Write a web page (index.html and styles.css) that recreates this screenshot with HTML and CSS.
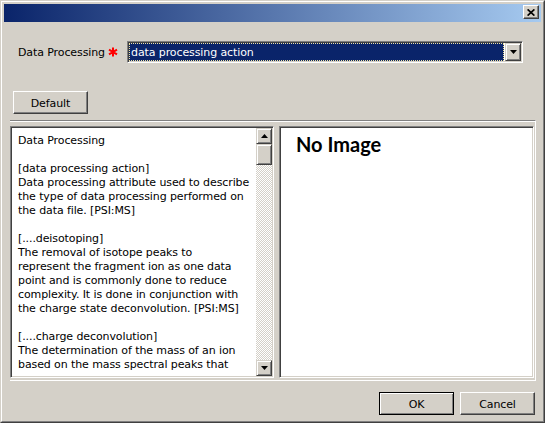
FILE: index.html
```html
<!DOCTYPE html>
<html>
<head>
<meta charset="utf-8">
<title>Data Processing</title>
<link rel="stylesheet" href="styles.css">
</head>
<body>
<div class="window">
  <div class="frame">
    <div class="titlebar">
      <button class="close" aria-label="Close">
        <svg width="8" height="7" viewBox="0 0 8 7"><path d="M0.6 0.4 L7.4 6.6 M7.4 0.4 L0.6 6.6" stroke="#000" stroke-width="1.7" fill="none"/></svg>
      </button>
    </div>
    <div class="content">
      <div class="field-row">
        <span class="label">Data Processing</span>
        <span class="required">
          <svg width="10" height="10" viewBox="0 0 10 10"><path d="M5 0.5 V9.5 M1 2.6 L9 7.4 M1 7.4 L9 2.6" stroke="#ff0000" stroke-width="2" fill="none"/></svg>
        </span>
        <div class="combo">
          <div class="combo-value"><span>data processing action</span></div>
          <div class="combo-btn">
            <svg width="7" height="4" viewBox="0 0 7 4"><path d="M0 0 H7 L3.5 4 Z" fill="#000"/></svg>
          </div>
        </div>
      </div>
      <div class="toolbar">
        <button class="btn">Default</button>
      </div>
      <div class="split">
        <div class="pane text-pane">
          <div class="text">Data Processing<br><br>[data processing action]<br>Data processing attribute used to describe<br>the type of data processing performed on<br>the data file. [PSI:MS]<br><br>[....deisotoping]<br>The removal of isotope peaks to<br>represent the fragment ion as one data<br>point and is commonly done to reduce<br>complexity. It is done in conjunction with<br>the charge state deconvolution. [PSI:MS]<br><br>[....charge deconvolution]<br>The determination of the mass of an ion<br>based on the mass spectral peaks that</div>
          <div class="scrollbar">
            <div class="sb-btn">
              <svg width="7" height="4" viewBox="0 0 7 4"><path d="M0 4 H7 L3.5 0 Z" fill="#000"/></svg>
            </div>
            <div class="sb-track"><div class="sb-thumb"></div></div>
            <div class="sb-btn">
              <svg width="7" height="4" viewBox="0 0 7 4"><path d="M0 0 H7 L3.5 4 Z" fill="#000"/></svg>
            </div>
          </div>
        </div>
        <div class="pane image-pane">
          <div class="no-image">No Image</div>
        </div>
      </div>
      <div class="actions">
        <button class="btn default">OK</button>
        <button class="btn">Cancel</button>
      </div>
    </div>
  </div>
</div>
</body>
</html>
```

FILE: styles.css
```css
* { box-sizing: border-box; }
html, body { margin: 0; padding: 0; }
body {
  width: 545px;
  height: 423px;
  overflow: hidden;
  background: #d4d0c8;
  font-family: "DejaVu Sans", Tahoma, sans-serif;
  font-size: 11px;
  letter-spacing: -0.1px;
  color: #000;
}
.window {
  width: 545px;
  height: 423px;
  border: 1px solid;
  border-color: #d4d0c8 #404040 #404040 #d4d0c8;
  background: #d4d0c8;
}
.frame {
  height: 100%;
  border: 1px solid;
  border-color: #fff #808080 #808080 #fff;
  padding: 2px;
  display: flex;
  flex-direction: column;
}
.titlebar {
  flex: none;
  height: 18px;
  background: linear-gradient(to right, #0a246a, #a6caf0);
  display: flex;
  justify-content: flex-end;
  align-items: flex-start;
  padding: 1px 2px 0 0;
}
.close {
  width: 16px;
  height: 14px;
  padding: 0;
  margin: 0;
  border: 1px solid;
  border-color: #fff #404040 #404040 #fff;
  box-shadow: inset -1px -1px #808080;
  background: #d4d0c8;
  display: flex;
  align-items: center;
  justify-content: center;
}
.content {
  flex: 1;
  display: flex;
  flex-direction: column;
}
.field-row {
  display: grid;
  grid-template-columns: 90px 19px 396px;
  align-items: center;
  height: 22px;
  margin: 19px 0 0 14px;
}
.label { padding-top: 1px; }
.required { display: flex; align-items: center; }
.combo {
  height: 22px;
  border: 1px solid;
  border-color: #808080 #fff #fff #808080;
  box-shadow: inset 1px 1px #404040, inset -1px -1px #d4d0c8;
  padding: 1px;
  background: #fff;
  display: flex;
  gap: 1px;
}
.combo-value {
  flex: 1;
  background: #0a246a;
  border: 1px dotted #f0e2a0;
  color: #fff;
  padding: 1px 0 0 1px;
  display: flex;
  align-items: center;
  white-space: nowrap;
}
.combo-btn {
  width: 16px;
  border: 1px solid;
  border-color: #d4d0c8 #404040 #404040 #d4d0c8;
  box-shadow: inset 1px 1px #fff, inset -1px -1px #808080;
  background: #d4d0c8;
  display: flex;
  align-items: center;
  justify-content: center;
}
.toolbar {
  margin: 28px 0 0 9px;
  display: flex;
}
.btn {
  width: 75px;
  height: 23px;
  padding: 1px 0 0;
  margin: 0;
  font: inherit;
  letter-spacing: inherit;
  color: #000;
  background: #d4d0c8;
  border: 1px solid;
  border-color: #fff #404040 #404040 #fff;
  box-shadow: inset -1px -1px #808080;
}
.btn.default {
  border-color: #000;
  box-shadow: inset 1px 1px #fff, inset -1px -1px #808080;
}
.split {
  height: 261px;
  margin: 6px 5px 0 6px;
  border-top: 1px solid #808080;
  border-right: 1px solid #fff;
  border-bottom: 1px solid #fff;
  box-shadow: inset 0 1px #fff;
  padding: 5px 1px 2px 0;
  display: flex;
  gap: 5px;
}
.pane {
  border: 1px solid;
  border-color: #808080 #fff #fff #808080;
  box-shadow: inset 1px 1px #404040, inset -1px -1px #d4d0c8;
  padding: 1px;
  background: #fff;
}
.text-pane {
  width: 264px;
  display: flex;
}
.text {
  flex: 1;
  padding: 6px 0 0 6px;
  line-height: 14px;
  white-space: nowrap;
  overflow: hidden;
}
.scrollbar {
  width: 16px;
  display: flex;
  flex-direction: column;
}
.sb-btn, .sb-thumb {
  flex: none;
  width: 16px;
  height: 16px;
  border: 1px solid;
  border-color: #d4d0c8 #404040 #404040 #d4d0c8;
  box-shadow: inset 1px 1px #fff, inset -1px -1px #808080;
  background: #d4d0c8;
  display: flex;
  align-items: center;
  justify-content: center;
}
.sb-thumb { height: 21px; }
.sb-track {
  flex: 1;
  background: repeating-conic-gradient(#d4d0c8 0% 25%, #fff 0% 50%) 0 0 / 2px 2px;
}
.image-pane { flex: 1; }
.no-image {
  font-family: Lato, "Open Sans", sans-serif;
  font-weight: bold;
  font-size: 20px;
  letter-spacing: 0;
  line-height: 24px;
  padding: 4px 0 0 15px;
}
.actions {
  margin-top: 11px;
  display: flex;
  justify-content: flex-end;
  gap: 6px;
  padding-right: 6px;
}
```
